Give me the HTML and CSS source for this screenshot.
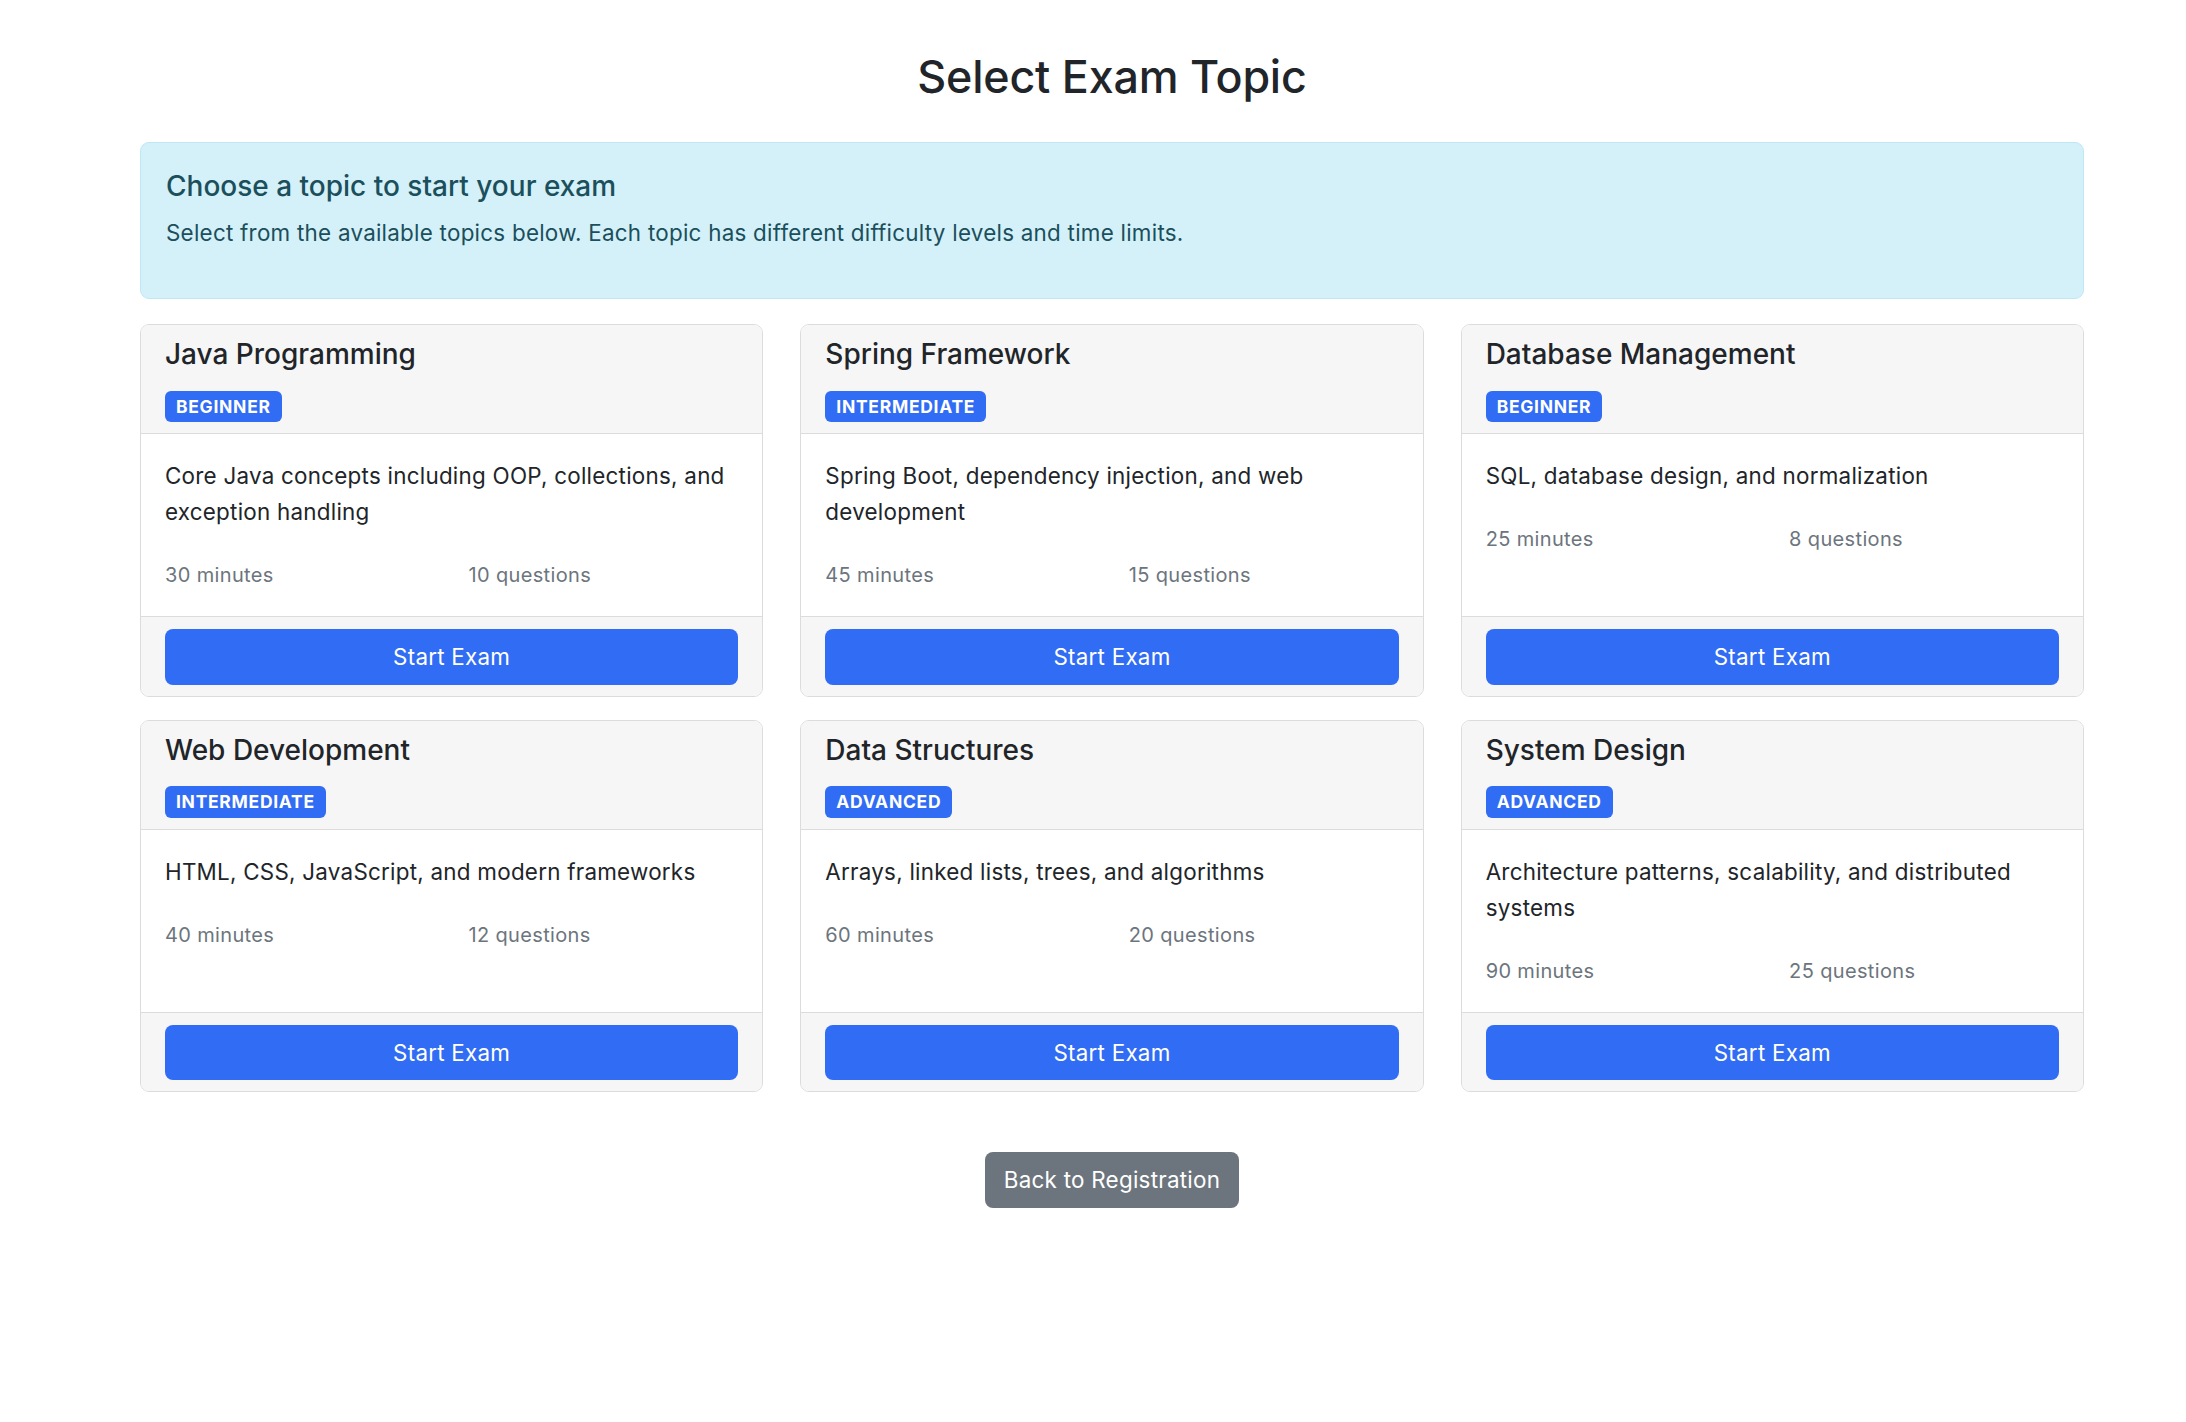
FILE: index.html
```html
<!DOCTYPE html>
<html lang="en">
<head>
    <meta charset="UTF-8">
    <meta name="viewport" content="width=device-width, initial-scale=1.0">
    <title>Select Exam Topic</title>
    <link rel="stylesheet" href="styles.css">
</head>
<body>
    <div class="container">
        <h2 class="page-title">Select Exam Topic</h2>

        <!-- Intro box -->
        <div class="info-box">
            <h4>Choose a topic to start your exam</h4>
            <p>Select from the available topics below. Each topic has different difficulty levels and time limits.</p>
        </div>

        <div class="topic-grid">
            <div class="topic-card">
                <div class="topic-header">
                    <h5>Java Programming</h5>
                    <span class="level">Beginner</span>
                </div>
                <div class="topic-body">
                    <p>Core Java concepts including OOP, collections, and exception handling</p>
                    <div class="meta">
                        <span>30 minutes</span>
                        <span>10 questions</span>
                    </div>
                </div>
                <div class="topic-footer">
                    <button class="start-btn">Start Exam</button>
                </div>
            </div>

            <div class="topic-card">
                <div class="topic-header">
                    <h5>Spring Framework</h5>
                    <span class="level">Intermediate</span>
                </div>
                <div class="topic-body">
                    <p>Spring Boot, dependency injection, and web development</p>
                    <div class="meta">
                        <span>45 minutes</span>
                        <span>15 questions</span>
                    </div>
                </div>
                <div class="topic-footer">
                    <button class="start-btn">Start Exam</button>
                </div>
            </div>

            <div class="topic-card">
                <div class="topic-header">
                    <h5>Database Management</h5>
                    <span class="level">Beginner</span>
                </div>
                <div class="topic-body">
                    <p>SQL, database design, and normalization</p>
                    <div class="meta">
                        <span>25 minutes</span>
                        <span>8 questions</span>
                    </div>
                </div>
                <div class="topic-footer">
                    <button class="start-btn">Start Exam</button>
                </div>
            </div>

            <div class="topic-card">
                <div class="topic-header">
                    <h5>Web Development</h5>
                    <span class="level">Intermediate</span>
                </div>
                <div class="topic-body">
                    <p>HTML, CSS, JavaScript, and modern frameworks</p>
                    <div class="meta">
                        <span>40 minutes</span>
                        <span>12 questions</span>
                    </div>
                </div>
                <div class="topic-footer">
                    <button class="start-btn">Start Exam</button>
                </div>
            </div>

            <div class="topic-card">
                <div class="topic-header">
                    <h5>Data Structures</h5>
                    <span class="level">Advanced</span>
                </div>
                <div class="topic-body">
                    <p>Arrays, linked lists, trees, and algorithms</p>
                    <div class="meta">
                        <span>60 minutes</span>
                        <span>20 questions</span>
                    </div>
                </div>
                <div class="topic-footer">
                    <button class="start-btn">Start Exam</button>
                </div>
            </div>

            <div class="topic-card">
                <div class="topic-header">
                    <h5>System Design</h5>
                    <span class="level">Advanced</span>
                </div>
                <div class="topic-body">
                    <p>Architecture patterns, scalability, and distributed systems</p>
                    <div class="meta">
                        <span>90 minutes</span>
                        <span>25 questions</span>
                    </div>
                </div>
                <div class="topic-footer">
                    <button class="start-btn">Start Exam</button>
                </div>
            </div>
        </div>

        <div class="back-row">
            <button class="back-btn">Back to Registration</button>
        </div>
    </div>
</body>
</html>
```

FILE: styles.css
```css
body, html {
    margin: 0;
    padding: 0;
    background-color: #ffffff;
    color: #212529;
    font-family: Inter, "Liberation Sans", sans-serif;
    font-size: 22.4px;
    line-height: 1.5;
    letter-spacing: 0.25px;
}

.container {
    width: 1944px;
    margin-left: 140px;
    padding-top: 51px;
}

.page-title {
    margin: 0 0 37px 0;
    font-size: 44.8px;
    font-weight: 500;
    line-height: 1.2;
    letter-spacing: -0.2px;
    text-align: center;
}

/* Intro box */
.info-box {
    background-color: #d4f1f9;
    border: 1px solid #bfe8f4;
    border-radius: 9px;
    color: #1b4f5c;
    padding: 27px 25px 23px;
    margin-bottom: 25px;
}

.info-box h4 {
    margin: 0 0 13px 0;
    font-size: 28px;
    font-weight: 500;
    line-height: 1.2;
    letter-spacing: 0;
}

.info-box p {
    margin: 0 0 25px 0;
}

/* Topic cards */
.topic-grid {
    display: grid;
    grid-template-columns: repeat(3, 1fr);
    column-gap: 37px;
    row-gap: 23px;
}

.topic-card {
    display: flex;
    flex-direction: column;
    border: 1px solid #dcdcdc;
    border-radius: 9px;
    overflow: hidden;
    background-color: #ffffff;
}

.topic-header {
    display: flex;
    flex-direction: column;
    align-items: flex-start;
    gap: 19px;
    background-color: #f6f6f6;
    border-bottom: 1px solid #dcdcdc;
    padding: 13px 24px 11px;
}

.topic-header h5 {
    margin: 0;
    font-size: 28px;
    font-weight: 500;
    line-height: 1.2;
    letter-spacing: 0;
}

.level {
    display: inline-block;
    background-color: #316cf4;
    color: #ffffff;
    font-size: 17.5px;
    font-weight: 700;
    line-height: 1;
    letter-spacing: 0.7px;
    text-transform: uppercase;
    padding: 7px 11px;
    border-radius: 6px;
}

.topic-body {
    flex: 1;
    padding: 24px 24px 26px;
}

.topic-body p {
    margin: 0 0 30px 0;
    line-height: 36px;
}

.meta {
    display: grid;
    grid-template-columns: 1fr 1fr;
    column-gap: 33.6px;
    color: #6c757d;
    font-size: 20px;
    letter-spacing: 0.35px;
}

.topic-footer {
    background-color: #f6f6f6;
    border-top: 1px solid #dcdcdc;
    padding: 12px 24px 11px;
}

.start-btn, .back-btn {
    font-family: inherit;
    font-size: 22.4px;
    line-height: 33.6px;
    letter-spacing: 0.25px;
    color: #ffffff;
    border: 1px solid transparent;
    border-radius: 8px;
    padding: 10px 18px;
    cursor: pointer;
}

.start-btn {
    display: block;
    width: 100%;
    background-color: #316cf4;
}

.back-row {
    display: flex;
    justify-content: center;
    margin-top: 60px;
}

.back-btn {
    background-color: #6c757d;
}
```
